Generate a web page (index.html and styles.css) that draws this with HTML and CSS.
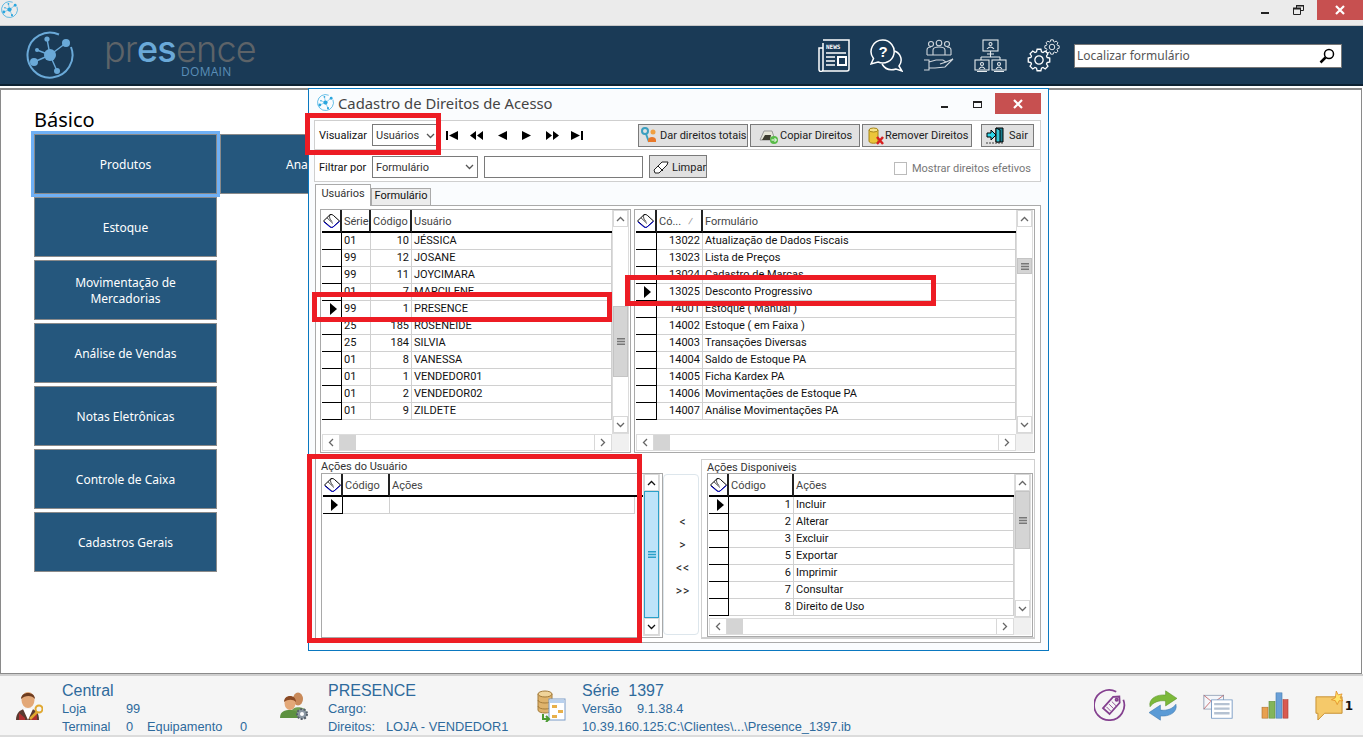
FILE: index.html
```html
<!DOCTYPE html>
<html lang="pt-BR">

<head>
  <meta charset="UTF-8" />
  <title>Presence Domain</title>
  <link rel="stylesheet" href="styles.css">
</head>

<body>
  <svg class="defs" width="0" height="0">
    <symbol id="logo" viewBox="0 0 48 48">
      <path d="M33 3.5A22.5 22.5 0 1 0 45 16" fill="none" stroke="currentColor" stroke-width="2" />
      <path d="M24 24L21 8M24 24L40 12M24 24L8 31M24 24L31 40M24 24L11 19" stroke="currentColor" stroke-width="1.4" />
      <circle cx="24" cy="24" r="6" fill="currentColor" />
      <circle cx="21" cy="8" r="2.6" fill="currentColor" />
      <circle cx="40" cy="12" r="4" fill="currentColor" />
      <circle cx="8" cy="31" r="4" fill="currentColor" />
      <circle cx="31" cy="40" r="3" fill="currentColor" />
      <circle cx="11" cy="19" r="2" fill="currentColor" />
    </symbol>
    <symbol id="book" viewBox="0 0 17 14">
      <path d="M.5 7L7 .7C8.500 .2 9.500 .7 10.500 1.500L16.500 7L10 13C9 13.600 8 13.400 7 12.500Z" fill="#fff" stroke="#000" />
      <path d="M1 8L7 13C8 13.800 9 13.800 10 13L16.500 7.500" fill="none" stroke="#00d" />
      <path d="M7 .7C6 3 6.500 5 9 7.500M4 3.800L10 9.500" fill="none" stroke="#000" stroke-width=".7" />
    </symbol>
    <symbol id="gear" viewBox="-11 -11 22 22">
      <path d="M7.46-2.28L9.85-1.74V1.74L7.46 2.28L6.89 3.66L8.19 5.74L5.74 8.19L3.66 6.89L2.28 7.46L1.74 9.85H-1.74L-2.28 7.46L-3.66 6.89L-5.74 8.19L-8.19 5.74L-6.89 3.66L-7.46 2.28L-9.85 1.74V-1.74L-7.46-2.28L-6.89-3.66L-8.19-5.74L-5.74-8.19L-3.66-6.89L-2.28-7.46L-1.74-9.85H1.74L2.28-7.46L3.66-6.89L5.74-8.19L8.19-5.74L6.89-3.66Z" fill="none" stroke="#fff" stroke-width="1.200" />
      <circle r="3.800" fill="none" stroke="#fff" stroke-width="1.200" />
    </symbol>
    <symbol id="up" viewBox="0 0 9 6"><path d="M1 5L4.500 1.500L8 5" fill="none" stroke="currentColor" stroke-width="1.300" /></symbol>
    <symbol id="down" viewBox="0 0 9 6"><path d="M1 1L4.500 4.500L8 1" fill="none" stroke="currentColor" stroke-width="1.300" /></symbol>
    <symbol id="left" viewBox="0 0 6 9"><path d="M5 1L1.500 4.500L5 8" fill="none" stroke="currentColor" stroke-width="1.300" /></symbol>
    <symbol id="right" viewBox="0 0 6 9"><path d="M1 1L4.500 4.500L1 8" fill="none" stroke="currentColor" stroke-width="1.300" /></symbol>
    <symbol id="grip" viewBox="0 0 8 7"><path d="M0 0h8v1.500H0zM0 2.750h8v1.500H0zM0 5.500h8V7H0z" fill="currentColor" /></symbol>
  </svg>

  <div class="titlebar">
    <svg class="app-icon" width="17" height="17"><use href="#logo" /></svg>
    <div class="win-btns">
      <span class="win-min"></span>
      <svg class="win-restore" width="11" height="10" viewBox="0 0 11 10">
        <path d="M3.500 3V.5h7v5H8M.5 3.500h7v6h-7z" fill="none" stroke="#222" />
        <path d="M3 .5h8M0 3.500h8" stroke="#222" stroke-width="2" />
      </svg>
      <span class="win-close"><svg width="10" height="10" viewBox="0 0 10 10"><path d="M1 1L9 9M9 1L1 9" stroke="#fff" stroke-width="2.200" /></svg></span>
    </div>
  </div>

  <header class="topbar">
    <svg class="logo" width="48" height="48"><use href="#logo" /></svg>
    <div class="brand">
      <div class="brand-name">pr<b>es</b>ence</div>
      <div class="brand-sub">DOMAIN</div>
    </div>
    <nav class="top-icons">
      <svg width="32" height="33" viewBox="0 0 32 33" fill="none" stroke="#fff" stroke-width="1.500">
        <path d="M5 4V30.500a2 2 0 0 1-4 0V9H5M5 32H29a2 2 0 0 0 2-2V1H5" />
        <text x="8" y="10" class="news-txt">NEWS</text>
        <path d="M8 14H28M8 18H17M8 22H17M8 26H17" />
        <rect x="20" y="18" width="8" height="8" stroke-width="2" />
      </svg>
      <svg width="33" height="33" viewBox="0 0 33 33" fill="none" stroke="#fff" stroke-width="1.500">
        <path d="M13 1A11.500 11.500 0 1 1 8 23L1 25L3.500 19.500A11.500 11.500 0 0 1 13 1Z" />
        <path d="M24.500 12A9.500 9.500 0 0 1 29 27L32 32L26 30C20 32 15 30 12 25" />
        <text x="8.500" y="18" class="q-txt">?</text>
      </svg>
      <svg class="dim" width="31" height="32" viewBox="0 0 31 32" fill="none" stroke="#cfd6dc" stroke-width="1.100">
        <circle cx="8" cy="5" r="2.500" /><circle cx="16" cy="4" r="2.800" /><circle cx="24" cy="5" r="2.500" />
        <path d="M4 16V11q0-3 4-3M28 16V11q0-3-4-3M10 16V11q0-3 6-3t6 3V16M4 16H28" />
        <path d="M1 21H6V31H1M6 23L13 21H20L23 23L17 25M23 23L30 20L22 28L12 29L6 29" />
      </svg>
      <svg width="33" height="33" viewBox="0 0 33 33" fill="none" stroke="#e4e9ed" stroke-width="1.100">
        <rect x="9" y="1" width="15" height="11" /><path d="M13 15H20M16.500 12V18M7 18H26M7 18V21M26 18V21" />
        <circle cx="16.500" cy="5" r="1.500" /><path d="M13 10q3.500-4 7 0" />
        <rect x="1" y="21" width="14" height="10" /><rect x="18" y="21" width="14" height="10" />
        <circle cx="8" cy="25" r="1.500" /><circle cx="25" cy="25" r="1.500" />
        <path d="M5 30q3-4 6 0M22 30q3-4 6 0M3 32.500H13M20 32.500H30" />
      </svg>
      <div class="gears">
        <svg class="gear-big" width="24" height="24"><use href="#gear" /></svg>
        <svg class="gear-small" width="16" height="16"><use href="#gear" /></svg>
      </div>
    </nav>
    <div class="search">
      <span>Localizar formulário</span>
      <svg width="16" height="16" viewBox="0 0 16 16" fill="none" stroke="#000">
        <circle cx="10" cy="6" r="4.500" stroke-width="1.500" /><path d="M6.500 9.500L1.500 14.500" stroke-width="2.500" />
      </svg>
    </div>
  </header>

  <main class="desk">
    <h2>Básico</h2>
    <div class="tiles">
      <a class="tile selected">Produtos</a>
      <a class="tile tile-cut">Ana</a>
      <a class="tile">Estoque</a><span></span>
      <a class="tile">Movimentação de<br>Mercadorias</a><span></span>
      <a class="tile">Análise de Vendas</a><span></span>
      <a class="tile">Notas Eletrônicas</a><span></span>
      <a class="tile">Controle de Caixa</a><span></span>
      <a class="tile">Cadastros Gerais</a>
    </div>
  </main>

  <footer class="status">
    <div class="st-group st-a">
      <svg width="28" height="32" viewBox="0 0 28 32">
        <path d="M1 30C1 23 5 20 9 19H17C21 20 24 23 24 30Z" fill="#5a3a30" />
        <path d="M8 19L13 30L18 19Z" fill="#fff" /><path d="M4 30V23L10 28V30ZM22 30V23L16 28V30Z" fill="#b03030" />
        <ellipse cx="13" cy="10" rx="6.500" ry="8" fill="#e3a878" /><path d="M6 9C6 1 20 1 20 9C17 5 10 5 6 9Z" fill="#6d3c20" />
        <circle cx="24" cy="19" r="3.500" fill="none" stroke="#e0a830" stroke-width="2" /><path d="M22 22L15 29" stroke="#e0a830" stroke-width="2.500" />
      </svg>
      <div class="st-text">
        <div class="st-title">Central</div>
        <div class="st-row"><span class="w64">Loja</span>99</div>
        <div class="st-row"><span class="w64">Terminal</span><span class="w21">0</span><span class="w93">Equipamento</span>0</div>
      </div>
    </div>
    <div class="st-group st-b">
      <svg width="29" height="30" viewBox="0 0 29 30">
        <ellipse cx="18" cy="8" rx="5" ry="6.500" fill="#c98a5a" /><path d="M12 20C12 15 24 15 26 20V24H12Z" fill="#6f9f50" />
        <ellipse cx="10" cy="12" rx="5.500" ry="7" fill="#e3a878" /><path d="M4 11C4 3 16 3 16 11C13 8 8 8 4 11Z" fill="#8a4a25" />
        <path d="M0 27C0 20 5 19 10 19C15 19 19 21 19 27Z" fill="#5d9140" />
        <circle cx="22" cy="23" r="5" fill="#8c98a4" stroke="#56606a" stroke-width="2" stroke-dasharray="2 1.500" /><circle cx="22" cy="23" r="2" fill="#fff" />
      </svg>
      <div class="st-text">
        <div class="st-title">PRESENCE</div>
        <div class="st-row">Cargo:</div>
        <div class="st-row"><span class="w58">Direitos:</span>LOJA - VENDEDOR1</div>
      </div>
    </div>
    <div class="st-group st-c">
      <svg width="30" height="32" viewBox="0 0 30 32">
        <path d="M1 4V20C1 24 15 24 15 20V4Z" fill="#dfb36c" stroke="#a57c3a" /><ellipse cx="8" cy="4" rx="7" ry="3" fill="#f0d49a" stroke="#a57c3a" />
        <path d="M1 10C1 14 15 14 15 10M1 16C1 20 15 20 15 16" fill="none" stroke="#a57c3a" />
        <rect x="12" y="9" width="16" height="21" fill="#fff" stroke="#7a9cc8" /><path d="M13 10H27V13H13Z" fill="#b9d1ee" />
        <rect x="15" y="15" width="5" height="3" fill="#e8b04a" /><rect x="21" y="20" width="5" height="3" fill="#e8b04a" /><rect x="15" y="25" width="5" height="3" fill="#e8b04a" />
        <path d="M6 24V29H12M9 26L12 29L9 32" fill="none" stroke="#4a9a30" stroke-width="2" />
      </svg>
      <div class="st-text">
        <div class="st-title">Série&nbsp; 1397</div>
        <div class="st-row"><span class="w55">Versão</span>9.1.38.4</div>
        <div class="st-row">10.39.160.125:C:\Clientes\...\Presence_1397.ib</div>
      </div>
    </div>
    <div class="st-tools">
      <svg width="32" height="33" viewBox="0 0 36 37" fill="none" stroke="#84408f" stroke-width="2">
        <path d="M25 3A17 17 0 1 0 33 12" />
        <path d="M10 21L22 9H29V16L17 28Z" transform="rotate(-3 18 18)" />
        <circle cx="25.500" cy="12" r="1.300" /><path d="M14 20L19 25M17 17L22 22M20 14L25 19" stroke-width="1" />
      </svg>
      <svg width="30" height="31" viewBox="0 0 29 37" preserveAspectRatio="none">
        <path d="M2 20C0 10 9 5 17 6V1L28 10L17 19V13C10 12 5 15 2 20Z" fill="#7cb93a" stroke="#5a912a" stroke-width=".6" />
        <path d="M27 17C29 27 20 32 12 31V36L1 27L12 18V24C19 25 24 22 27 17Z" fill="#5b9bd6" stroke="#3f78ad" stroke-width=".6" />
      </svg>
      <svg width="30" height="26" viewBox="0 0 35 34" preserveAspectRatio="none">
        <rect x="1" y="3" width="23" height="18" fill="#f4f6fa" stroke="#8898b0" /><path d="M1 3L12 13L24 3M1 21L9 11" fill="none" stroke="#c05a5a" />
        <rect x="10" y="9" width="24" height="24" fill="#fff" stroke="#6f93c0" /><path d="M13 13H31V16H13ZM13 19H31V22H13ZM13 25H31V28H13Z" fill="#b5c2d2" />
      </svg>
      <svg width="28" height="27" viewBox="0 0 28 32" preserveAspectRatio="none">
        <rect x="1" y="18" width="6" height="13" fill="#e8a050" stroke="#a86a28" stroke-width=".6" />
        <rect x="8" y="11" width="6" height="20" fill="#83b55a" stroke="#5a8a36" stroke-width=".6" />
        <rect x="15" y="1" width="6" height="30" fill="#6aa0d8" stroke="#3f78ad" stroke-width=".6" />
        <rect x="22" y="9" width="5" height="22" fill="#d85a50" stroke="#a83a32" stroke-width=".6" />
      </svg>
      <div class="note">
        <svg width="29" height="30" viewBox="0 0 30 31">
          <path d="M1 6H28V23H10L3 30V23H1Z" fill="#f5c96a" stroke="#c89030" />
          <path d="M22 0L24 4L28 3L26 7L29 10L25 10L23 14L21 10L17 9L21 7Z" fill="#ffe26a" stroke="#e08a20" stroke-width=".8" />
        </svg>
        <span>1</span>
      </div>
    </div>
  </footer>

  <section class="dialog">
    <div class="dlg-title">
      <svg width="17" height="17"><use href="#logo" /></svg>
      <span>Cadastro de Direitos de Acesso</span>
      <div class="dlg-btns">
        <span class="dlg-min"></span>
        <span class="dlg-max"></span>
        <span class="dlg-close"><svg width="10" height="10" viewBox="0 0 10 10"><path d="M1 1L9 9M9 1L1 9" stroke="#fff" stroke-width="2.200" /></svg></span>
      </div>
    </div>

    <div class="dlg-body">
      <div class="bar bar-nav">
        <label class="lbl">Visualizar</label>
        <div class="combo combo-a">Usuários<svg width="9" height="6"><use href="#down" /></svg></div>
        <div class="nav-btns">
          <svg width="12" height="9" viewBox="0 0 12 9"><path d="M0 0h2v9H0zM12 0v9L3 4.500z" /></svg>
          <svg width="13" height="9" viewBox="0 0 13 9"><path d="M6 0v9L0 4.500zM13 0v9L7 4.500z" /></svg>
          <svg width="9" height="9" viewBox="0 0 9 9"><path d="M9 0v9L0 4.500z" /></svg>
          <svg width="9" height="9" viewBox="0 0 9 9"><path d="M0 0v9L9 4.500z" /></svg>
          <svg width="13" height="9" viewBox="0 0 13 9"><path d="M0 0v9L6 4.500zM7 0v9L13 4.500z" /></svg>
          <svg width="12" height="9" viewBox="0 0 12 9"><path d="M10 0h2v9h-2zM0 0v9L9 4.500z" /></svg>
        </div>
        <div class="actions">
          <button class="btn w110 pad-dar">
            <svg width="16" height="17" viewBox="0 0 16 17"><circle cx="4" cy="4" r="3" fill="none" stroke="#3a9fc0" stroke-width="2" /><path d="M5 7L8 15" stroke="#3a9fc0" stroke-width="2" /><circle cx="12" cy="5" r="2.500" fill="#f0a040" /><path d="M7 13C7 9 15 9 15 13V15H7Z" fill="#e8782a" /></svg>
            Dar direitos totais
          </button>
          <button class="btn w110 pad-copiar">
            <svg width="20" height="16" viewBox="0 0 20 16"><path d="M1 12L5 3H13L16 12Z" fill="#e6e6d8" stroke="#999" /><path d="M3 12L6 7H12L11 12Z" fill="#3d3d30" /><circle cx="15" cy="12" r="4" fill="#58bb48" /><path d="M12.500 12H17M15.500 10L17.500 12L15.500 14" fill="none" stroke="#fff" /></svg>
            Copiar Direitos
          </button>
          <button class="btn w110 pad-remover">
            <svg width="16" height="18" viewBox="0 0 16 18"><path d="M1 3V14C1 17 10 17 10 14V3Z" fill="#ecc63a" stroke="#a68414" /><ellipse cx="5.500" cy="3" rx="4.500" ry="2" fill="#f7e48a" stroke="#a68414" /><path d="M9 10L15 17M15 10L9 17" stroke="#d82020" stroke-width="2.500" /></svg>
            Remover Direitos
          </button>
          <button class="btn w53 pad-sair">
            <svg width="18" height="17" viewBox="0 0 18 17"><path d="M10 1H17V15H10Z" fill="#1b7c8c" stroke="#000" /><path d="M10 1L14 3V15L10 15Z" fill="#38c6d6" stroke="#000" /><path d="M1 6H5V3L10 8L5 13V10H1Z" fill="#31d6e8" stroke="#000" /><path d="M0 16H18" stroke="#444" stroke-dasharray="2 1" /></svg>
            Sair
          </button>
        </div>
      </div>

      <div class="bar bar-filter">
        <label class="lbl">Filtrar por</label>
        <div class="combo combo-b">Formulário<svg width="9" height="6"><use href="#down" /></svg></div>
        <div class="field"></div>
        <button class="btn w58">
          <svg width="16" height="13" viewBox="0 0 16 13"><path d="M1 9L9 1H15L14 4L6 12H2Z" fill="#fff" stroke="#222" /><path d="M5 5L10 10" stroke="#222" /></svg>
          Limpar
        </button>
        <label class="check"><i></i>Mostrar direitos efetivos</label>
      </div>

      <div class="tabs">
        <span class="tab active">Usuários</span>
        <span class="tab">Formulário</span>
      </div>

      <div class="tab-page">
        <div class="top-grids">
          <div class="grid grid-users">
            <div class="view">
              <table>
                <colgroup><col class="c20"><col class="c29"><col class="c41"><col></colgroup>
                <tr><th class="ind"><svg width="17" height="14"><use href="#book" /></svg></th><th>Série</th><th>Código</th><th>Usuário</th></tr>
                <tr><td class="ind"></td><td>01</td><td class="num">10</td><td>JÉSSICA</td></tr>
                <tr><td class="ind"></td><td>99</td><td class="num">12</td><td>JOSANE</td></tr>
                <tr><td class="ind"></td><td>99</td><td class="num">11</td><td>JOYCIMARA</td></tr>
                <tr><td class="ind"></td><td>01</td><td class="num">7</td><td>MARCILENE</td></tr>
                <tr><td class="ind"><i class="cur"></i></td><td>99</td><td class="num">1</td><td>PRESENCE</td></tr>
                <tr><td class="ind"></td><td>25</td><td class="num">185</td><td>ROSENEIDE</td></tr>
                <tr><td class="ind"></td><td>25</td><td class="num">184</td><td>SILVIA</td></tr>
                <tr><td class="ind"></td><td>01</td><td class="num">8</td><td>VANESSA</td></tr>
                <tr><td class="ind"></td><td>01</td><td class="num">1</td><td>VENDEDOR01</td></tr>
                <tr><td class="ind"></td><td>01</td><td class="num">2</td><td>VENDEDOR02</td></tr>
                <tr><td class="ind"></td><td>01</td><td class="num">9</td><td>ZILDETE</td></tr>
              </table>
            </div>
            <div class="vscroll">
              <span class="arrow"><svg width="9" height="6"><use href="#up" /></svg></span>
              <div class="track"><span class="thumb th-users"><svg width="8" height="7"><use href="#grip" /></svg></span></div>
              <span class="arrow"><svg width="9" height="6"><use href="#down" /></svg></span>
            </div>
            <div class="hscroll">
              <span class="arrow"><svg width="6" height="9"><use href="#left" /></svg></span>
              <span class="hthumb"></span>
              <span class="arrow end"><svg width="6" height="9"><use href="#right" /></svg></span>
            </div>
            <div class="corner"></div>
          </div>

          <div class="grid grid-forms">
            <div class="view">
              <table>
                <colgroup><col class="c21"><col class="c46"><col></colgroup>
                <tr><th class="ind"><svg width="17" height="14"><use href="#book" /></svg></th><th>Có... <em class="sort">⁄</em></th><th>Formulário</th></tr>
                <tr><td class="ind"></td><td class="num">13022</td><td>Atualização de Dados Fiscais</td></tr>
                <tr><td class="ind"></td><td class="num">13023</td><td>Lista de Preços</td></tr>
                <tr><td class="ind"></td><td class="num">13024</td><td>Cadastro de Marcas</td></tr>
                <tr><td class="ind"><i class="cur"></i></td><td class="num">13025</td><td>Desconto Progressivo</td></tr>
                <tr><td class="ind"></td><td class="num">14001</td><td>Estoque ( Manual )</td></tr>
                <tr><td class="ind"></td><td class="num">14002</td><td>Estoque ( em Faixa )</td></tr>
                <tr><td class="ind"></td><td class="num">14003</td><td>Transações Diversas</td></tr>
                <tr><td class="ind"></td><td class="num">14004</td><td>Saldo de Estoque PA</td></tr>
                <tr><td class="ind"></td><td class="num">14005</td><td>Ficha Kardex PA</td></tr>
                <tr><td class="ind"></td><td class="num">14006</td><td>Movimentações de Estoque PA</td></tr>
                <tr><td class="ind"></td><td class="num">14007</td><td>Análise Movimentações PA</td></tr>
              </table>
            </div>
            <div class="vscroll">
              <span class="arrow"><svg width="9" height="6"><use href="#up" /></svg></span>
              <div class="track"><span class="thumb th-forms"><svg width="8" height="7"><use href="#grip" /></svg></span></div>
              <span class="arrow"><svg width="9" height="6"><use href="#down" /></svg></span>
            </div>
            <div class="hscroll">
              <span class="arrow"><svg width="6" height="9"><use href="#left" /></svg></span>
              <span class="hthumb"></span>
              <span class="arrow end"><svg width="6" height="9"><use href="#right" /></svg></span>
            </div>
            <div class="corner"></div>
          </div>
        </div>

        <div class="bottom-row">
          <div class="group group-user">
            <div class="group-lbl">Ações do Usuário</div>
            <div class="grid grid-user-acts">
              <div class="view view-line">
                <table class="t312">
                  <colgroup><col class="c20"><col class="c47"><col></colgroup>
                  <tr><th class="ind"><svg width="17" height="14"><use href="#book" /></svg></th><th>Código</th><th>Ações</th></tr>
                  <tr><td class="ind"><i class="cur"></i></td><td></td><td></td></tr>
                </table>
              </div>
              <div class="vscroll">
                <span class="arrow dark"><svg width="9" height="6"><use href="#up" /></svg></span>
                <div class="track"><span class="thumb th-blue"><svg width="8" height="7"><use href="#grip" /></svg></span></div>
                <span class="arrow dark"><svg width="9" height="6"><use href="#down" /></svg></span>
              </div>
            </div>
          </div>

          <div class="move-btns">
            <span>&lt;</span>
            <span>&gt;</span>
            <span>&lt;&lt;</span>
            <span>&gt;&gt;</span>
          </div>

          <div class="group group-avail">
            <div class="group-lbl">Ações Disponiveis</div>
            <div class="grid grid-avail">
              <div class="view">
                <table>
                  <colgroup><col class="c20"><col class="c65"><col></colgroup>
                  <tr><th class="ind"><svg width="17" height="14"><use href="#book" /></svg></th><th>Código</th><th>Ações</th></tr>
                  <tr><td class="ind"><i class="cur"></i></td><td class="num">1</td><td>Incluir</td></tr>
                  <tr><td class="ind"></td><td class="num">2</td><td>Alterar</td></tr>
                  <tr><td class="ind"></td><td class="num">3</td><td>Excluir</td></tr>
                  <tr><td class="ind"></td><td class="num">5</td><td>Exportar</td></tr>
                  <tr><td class="ind"></td><td class="num">6</td><td>Imprimir</td></tr>
                  <tr><td class="ind"></td><td class="num">7</td><td>Consultar</td></tr>
                  <tr><td class="ind"></td><td class="num">8</td><td>Direito de Uso</td></tr>
                </table>
              </div>
              <div class="vscroll">
                <span class="arrow"><svg width="9" height="6"><use href="#up" /></svg></span>
                <div class="track"><span class="thumb th-avail"><svg width="8" height="7"><use href="#grip" /></svg></span></div>
                <span class="arrow"><svg width="9" height="6"><use href="#down" /></svg></span>
              </div>
              <div class="hscroll">
                <span class="arrow"><svg width="6" height="9"><use href="#left" /></svg></span>
                <span class="hthumb"></span>
                <span class="arrow end"><svg width="6" height="9"><use href="#right" /></svg></span>
              </div>
              <div class="corner"></div>
            </div>
          </div>
        </div>
      </div>
    </div>
  </section>

  <!-- marcacoes vermelhas por cima do print -->
  <div class="mark mark-visualizar"></div>
  <div class="mark mark-user"></div>
  <div class="mark mark-form"></div>
  <div class="mark mark-actions"></div>
</body>

</html>
```

FILE: styles.css
```css
* {
  box-sizing: border-box;
}

html,
body {
  margin: 0;
  height: 737px;
  overflow: hidden;
}

body {
  position: relative;
  display: flex;
  flex-direction: column;
  font-family: "Noto Sans", "Liberation Sans", sans-serif;
  font-size: 11px;
  color: #111;
  background: #fff;
}

.defs {
  position: absolute;
}

svg {
  flex-shrink: 0;
}

/* janela principal */
.titlebar {
  height: 26px;
  background: #ebebeb;
  border-bottom: 1px solid #c8c8c8;
  display: flex;
  justify-content: space-between;
  flex-shrink: 0;
}

.app-icon {
  color: #2ba6de;
  margin: 1px 0 0 1px;
}

.win-btns {
  display: flex;
  align-items: flex-start;
}

.win-min {
  width: 8px;
  height: 2px;
  background: #222;
  margin: 12px 24px 0 0;
}

.win-restore {
  margin: 5px 13px 0 0;
}

.win-close {
  width: 46px;
  height: 20px;
  background: #c75050;
  display: flex;
  align-items: center;
  justify-content: center;
}

.topbar {
  height: 60px;
  background: #1a3a56;
  border-bottom: 2px solid #0d2233;
  display: flex;
  align-items: center;
  padding: 0 21px 0 26px;
  flex-shrink: 0;
}

.logo {
  color: #6aa9d8;
}

.brand {
  margin-left: 30px;
  width: 156px;
  color: #5d6368;
}

.brand-name {
  font-family: Inter, sans-serif;
  font-weight: 300;
  font-size: 36px;
  line-height: 28px;
  letter-spacing: -.8px;
  white-space: nowrap;
  margin-top: 2px;
}

.brand-name b {
  font-weight: 500;
  color: #6aa9d8;
}

.brand-sub {
  font-family: "Open Sans", sans-serif;
  font-size: 12px;
  line-height: 12px;
  letter-spacing: .3px;
  color: #5b8fb8;
  margin: 3px 0 0 77px;
}

.top-icons {
  margin-left: auto;
  display: flex;
  align-items: center;
  gap: 20px;
}

.news-txt {
  font: bold 6px "DejaVu Sans Mono", monospace;
  fill: #fff;
  stroke: none;
}

.q-txt {
  font: bold 15px "Liberation Sans", sans-serif;
  fill: #fff;
  stroke: none;
}

.gears {
  position: relative;
  width: 33px;
  height: 33px;
}

.gear-big {
  position: absolute;
  left: 0;
  bottom: 0;
}

.gear-small {
  position: absolute;
  right: 0;
  top: 0;
}

.search {
  width: 268px;
  height: 24px;
  margin: 1px 0 0 14px;
  background: #fff;
  border: 1px solid #777;
  display: flex;
  align-items: center;
  justify-content: space-between;
  padding: 0 6px 0 2px;
  font-size: 12px;
  color: #555;
}

.desk {
  flex: 1;
  border: 1px solid #8a8a8a;
  border-top-width: 2px;
  margin: 2px 1px 0 0;
  padding: 16px 0 0 33px;
}

.desk h2 {
  margin: 0;
  font-size: 20px;
  line-height: 28px;
  font-weight: 400;
  color: #000;
}

.tiles {
  display: grid;
  grid-template-columns: 183px 183px;
  grid-auto-rows: 60px;
  gap: 3px;
}

.tile {
  background: #25577d;
  border: 1px solid #8a8a8a;
  color: #fff;
  font-size: 12px;
  line-height: 16px;
  padding-top: 2px;
  display: flex;
  align-items: center;
  justify-content: center;
  text-align: center;
}

.tile.selected {
  outline: 3px solid #6fb0f5;
}

.tile-cut {
  justify-content: flex-start;
  padding-left: 65px;
}

/* rodape */
.status {
  height: 63px;
  background: #f5f5f5;
  border-top: 2px solid #cfcfcf;
  border-bottom: 2px solid #dcdcdc;
  display: flex;
  align-items: center;
  padding: 0 10px 0 15px;
  font-family: "Liberation Sans", Arial, sans-serif;
  color: #2e6a9c;
  flex-shrink: 0;
}

.st-group {
  display: flex;
  align-items: center;
}

.st-text {
  padding-top: 6px;
}

.st-a {
  width: 265px;
  gap: 19px;
}

.st-b {
  width: 257px;
  gap: 19px;
}

.st-c {
  gap: 15px;
}

.st-title {
  font-size: 16px;
  line-height: 18px;
}

.st-row {
  font-size: 12.800px;
  line-height: 18px;
  display: flex;
}

.w64 { width: 64px; }
.w21 { width: 21px; }
.w93 { width: 93px; }
.w58 { width: 58px; }
.w55 { width: 55px; }

.st-tools {
  margin-left: auto;
  display: flex;
  align-items: center;
  gap: 22px;
}

.st-tools > :nth-child(3) {
  margin-left: 3px;
}

.st-tools > :nth-child(4) {
  margin-left: 6px;
}

.st-tools > :nth-child(5) {
  margin-left: 4px;
}

.note {
  display: flex;
  align-items: center;
}

.note span {
  font: bold 12px "DejaVu Sans", sans-serif;
  color: #111;
  margin-left: 1px;
}

/* dialogo sobre a area de trabalho */
.dialog {
  position: absolute;
  left: 308px;
  top: 88px;
  width: 741px;
  height: 563px;
  font-family: Roboto, "Noto Sans", sans-serif;
  background: #fafcfe;
  border: 1px solid #0a78c0;
}

.dlg-title {
  height: 31px;
  display: flex;
  align-items: flex-start;
  padding: 5px 7px 0 8px;
  color: #444;
}

.dlg-title svg {
  color: #2ba6de;
}

.dlg-title > span {
  margin: -2px 0 0 4px;
  line-height: 22px;
  font-family: "Noto Sans", sans-serif;
  font-size: 14.800px;
}

.dlg-btns {
  margin-left: auto;
  display: flex;
  align-items: flex-start;
  margin-top: -1px;
}

.dlg-min {
  width: 7px;
  height: 2px;
  background: #222;
  margin: 13px 25px 0 0;
}

.dlg-max {
  width: 9px;
  height: 7px;
  border: 1px solid #222;
  border-top-width: 2px;
  margin: 8px 13px 0 0;
}

.dlg-close {
  width: 46px;
  height: 21px;
  background: #c75050;
  display: flex;
  align-items: center;
  justify-content: center;
}

.dlg-body {
  padding: 0 7px 0 5px;
}

.bar {
  display: flex;
  align-items: center;
  background: #fff;
  border: 1px solid #cfcfcf;
  padding-left: 4px;
}

.bar-nav {
  height: 30px;
  padding-right: 6px;
}

.bar-filter {
  height: 32px;
  border-top-width: 0;
  padding-top: 2px;
}

.lbl {
  width: 53px;
  padding-top: 1px;
  flex-shrink: 0;
}

.combo {
  height: 22px;
  border: 1px solid #7a7a7a;
  background: #fff;
  display: flex;
  align-items: center;
  justify-content: space-between;
  padding: 1px 3px 0;
  color: #333;
}

.combo svg {
  color: #555;
}

.combo-a {
  width: 67px;
}

.combo-b {
  width: 106px;
}

.nav-btns {
  display: flex;
  gap: 12px;
  margin-left: 7px;
  align-items: center;
}

.nav-btns svg:nth-child(3) {
  margin-left: 3px;
}

.nav-btns svg:nth-child(4) {
  margin: 0 3px;
}

.actions {
  margin-left: auto;
  display: flex;
  gap: 2px;
}

.btn {
  height: 23px;
  padding: 1px 3px 0;
  background: #e1e1e1;
  border: 1px solid #7a7a7a;
  font: inherit;
  color: #222;
  display: flex;
  align-items: center;
  justify-content: flex-start;
  gap: 3px;
  white-space: nowrap;
}

.w110 { width: 110px; }

.pad-dar { padding-left: 2px; gap: 3px; }
.pad-copiar { padding-left: 8px; gap: 1px; }
.pad-remover { padding-left: 5px; gap: 1px; }
.pad-sair { padding-left: 4px; gap: 5px; }

.w53 {
  width: 53px;
  margin-left: 7px;
}

.field {
  width: 159px;
  height: 22px;
  border: 1px solid #7a7a7a;
  margin-left: 6px;
}

.btn.w58 {
  margin-left: 6px;
  width: 58px;
  padding-top: 2px;
}

.check {
  margin: 3px 9px 0 auto;
  display: flex;
  align-items: center;
  gap: 5px;
  color: #777;
}

.check i {
  width: 13px;
  height: 13px;
  border: 1px solid #bbb;
  background: #fff;
}

.tabs {
  height: 22px;
  margin-top: 1px;
  padding-left: 1px;
  display: flex;
  align-items: flex-end;
}

.tab {
  width: 60px;
  height: 17px;
  text-align: center;
  line-height: 14px;
  background: #ececec;
  border: 1px solid #aaa;
  border-bottom: 0;
}

.tab.active {
  height: 22px;
  width: 56px;
  line-height: 18px;
  background: #fff;
  position: relative;
  top: 1px;
  color: #333;
  z-index: 1;
}

.tab-page {
  height: 438px;
  margin-left: 1px;
  background: #fff;
  border: 1px solid #aaa;
  padding: 3px 5px 0 4px;
}

.top-grids {
  display: flex;
  gap: 3px;
}

.grid {
  display: grid;
  grid-template-columns: 1fr 17px;
  border: 1px solid #a9a9a9;
  padding: 0 1px 1px;
  background: #fff;
}

.grid-users {
  width: 311px;
  height: 244px;
  grid-template-rows: 224px 17px;
}

.grid-forms {
  width: 401px;
  height: 244px;
  grid-template-rows: 224px 17px;
}

.view {
  overflow: hidden;
}

table {
  width: 100%;
  table-layout: fixed;
  border-collapse: separate;
  border-spacing: 0;
}

.t312 {
  width: 312px;
}

.c20 { width: 20px; }
.c21 { width: 21px; }
.c29 { width: 29px; }
.c41 { width: 41px; }
.c46 { width: 46px; }
.c47 { width: 47px; }
.c65 { width: 65px; }

th {
  height: 23px;
  padding: 1px 2px 0;
  text-align: left;
  font-weight: 400;
  color: #444;
  border-right: 2px solid #222;
  border-bottom: 2px solid #000;
  white-space: nowrap;
  overflow: hidden;
}

th:last-child {
  border-right: 0;
}

th.ind {
  padding: 3px 0 0 1px;
}

td {
  height: 17px;
  padding: 0 2px;
  line-height: 14px;
  border-right: 1px solid #d0d0d0;
  border-bottom: 1px solid #d0d0d0;
  white-space: nowrap;
  overflow: hidden;
}

td.num {
  text-align: right;
}

td.ind {
  padding: 0;
  border-right: 1px solid #000;
  border-bottom: 1px solid #000;
}

.cur {
  display: block;
  width: 0;
  height: 0;
  margin: 0 0 0 8px;
  border-left: 7px solid #000;
  border-top: 6px solid transparent;
  border-bottom: 6px solid transparent;
}

.sort {
  font-style: normal;
  color: #999;
  margin-left: 4px;
}

.vscroll {
  display: flex;
  flex-direction: column;
  background: #fff;
  border: 1px solid #dcdcdc;
  border-width: 0 1px 1px;
}

.arrow {
  height: 17px;
  flex-shrink: 0;
  display: flex;
  align-items: center;
  justify-content: center;
  background: #fff;
  color: #666;
  border: 1px solid #d8d8d8;
}

.arrow.dark {
  color: #111;
}

.track {
  flex: 1;
  background: #fff;
  display: flex;
  flex-direction: column;
  min-height: 0;
}

.thumb {
  display: flex;
  align-items: center;
  justify-content: center;
  background: #d4d4d4;
  border: 1px solid #c4c4c4;
  color: #777;
}

.th-users {
  margin-top: 79px;
  height: 71px;
}

.th-forms {
  margin-top: 31px;
  height: 16px;
}

.th-avail {
  height: 58px;
}

.th-blue {
  flex: 1;
  background: #bde3f9;
  border-color: #2aa0c8;
  color: #2aa0c8;
}

.hscroll {
  display: flex;
  background: #fff;
  border: 1px solid #dcdcdc;
}

.hscroll .arrow {
  width: 17px;
  height: auto;
  border-width: 0 1px 0 0;
}

.hscroll .arrow.end {
  margin-left: auto;
  border-width: 0 0 0 1px;
}

.hthumb {
  width: 16px;
  background: #d4d4d4;
}

.corner {
  background: #f0f0f0;
}

.bottom-row {
  display: flex;
  height: 180px;
  margin: 6px 0 0 -3px;
}

.group {
  height: 100%;
}

.group-lbl {
  height: 14px;
  line-height: 16px;
  color: #333;
}

.group-user {
  width: 347px;
  padding-left: 4px;
}

.grid-user-acts {
  width: 342px;
  height: 165px;
  grid-template-rows: 1fr;
}

.view-line {
  background: linear-gradient(#000, #000) 0 21px / 100% 2px no-repeat;
}

.grid-user-acts .vscroll {
  margin-right: 1px;
  margin-left: -1px;
}

.move-btns {
  width: 37px;
  height: 161px;
  margin-top: 15px;
  border: 1px solid #dde6ec;
  border-radius: 4px;
  display: flex;
  flex-direction: column;
  align-items: center;
  gap: 7px;
  padding: 39px 0 0 4px;
  font-size: 12px;
  line-height: 16px;
  letter-spacing: 1px;
  color: #222;
}

.group-avail {
  width: 334px;
  margin-left: 2px;
  border: 1px solid #cfcfcf;
  border-bottom-width: 2px;
  padding: 0 1px 0 5px;
  height: 180px;
}

.grid-avail {
  width: 326px;
  height: 164px;
  grid-template-rows: 144px 17px;
  margin-top: -1px;
}

.mark {
  position: absolute;
  border: 5px solid #ed1c24;
  pointer-events: none;
}

.mark-visualizar {
  left: 305px;
  top: 113px;
  width: 136px;
  height: 42px;
}

.mark-user {
  left: 312px;
  top: 292px;
  width: 300px;
  height: 30px;
}

.mark-form {
  left: 625px;
  top: 275px;
  width: 311px;
  height: 31px;
}

.mark-actions {
  left: 307px;
  top: 454px;
  width: 335px;
  height: 189px;
}
```
